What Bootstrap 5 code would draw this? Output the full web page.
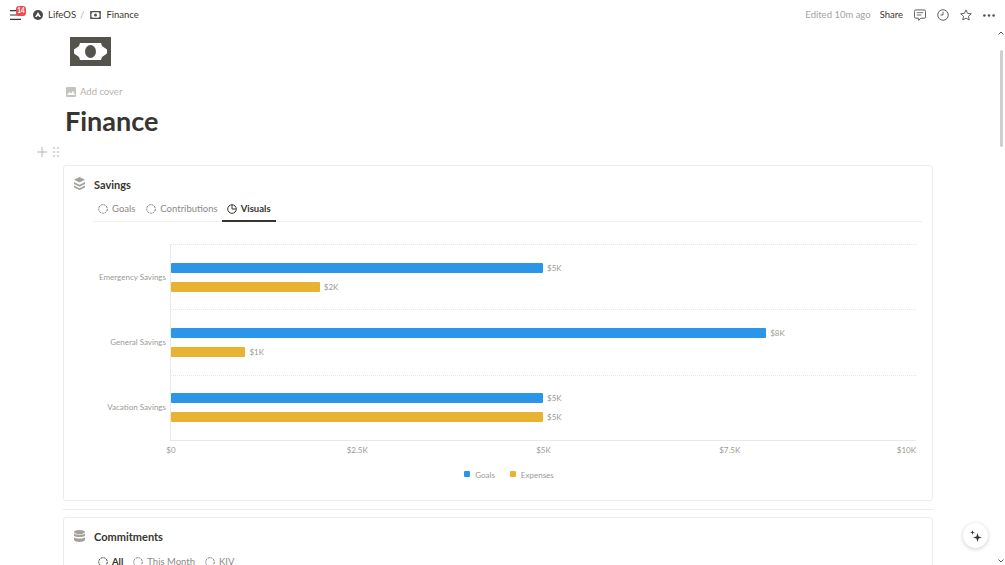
<!DOCTYPE html>
<html lang="en">
<head>
  <meta charset="UTF-8" />
  <title>Finance</title>
  <link href="https://cdn.jsdelivr.net/npm/bootstrap@5.3.0/dist/css/bootstrap.min.css" rel="stylesheet">
  <style>
    html, body { height: 100%; overflow: hidden; }
    body { font-family: Lato, "Noto Sans", sans-serif; color: #37352f; background: #fff; font-size: 14px; }
    .app-shell { height: 565px; position: relative; overflow: hidden; }
    .top-bar { height: 30px; padding: 0 10px; font-size: 9.5px; }
    .menu-wrap { position: relative; width: 12px; height: 10px; margin-right: 11px; }
    .menu-count { position: absolute; top: -4px; left: 6px; background: #eb4d4d; color: #fff; font-size: 6.5px; font-weight: 700; line-height: 10px; height: 10px; width: 10px; border-radius: 3px; text-align: center; }
    .crumb-logo { margin-right: 5px; }
    .crumb-note { margin: 0 5px 0 3px; }
    .crumb-sep { color: #b5b3ae; margin: 0 3px 0 4px; }
    .edited-at { color: #a5a39e; font-size: 9.5px; margin-right: -2px; }
    .bar-actions { gap: 11px; }
    .page-body { padding-left: 65px; width: 933px; }
    .page-icon { width: 41px; height: 29px; margin: 7px 0 0 5px; background: #55534e; }
    .add-cover { color: #b5b3ae; font-size: 9.5px; height: 20px; margin-top: 16px; margin-left: 1px; gap: 4px; }
    .page-title { font-size: 27px; font-weight: 700; line-height: 38px; margin: 0; height: 38px; }
    .drag-row { height: 22px; margin-left: -28px; gap: 6px; margin-top: 1px; }
    .panel-box { margin-left: -2px; border: 1px solid #ececea; border-radius: 3px; padding: 11px 10px 0 10px; margin-top: 2px; }
    .panel-head { padding-left: 20px; font-size: 11px; font-weight: 700; height: 16px; position: relative; }
    .panel-glyph { position: absolute; left: 0; top: 0; }
    .glyph-low { top: 1px; }
    .tab-row { margin: 7px 0 0 19px; height: 22px; border-bottom: 1px solid #efefed; font-size: 9.5px; color: #8c8a85; }
    .tab-item { display: flex; align-items: center; gap: 4px; padding: 0 6px 4px 5px; height: 22px; }
    .tab-item.is-on { color: #37352f; font-weight: 700; border-bottom: 2px solid #37352f; margin-left: -2px; padding: 0 5px 2px 5px; }
    .chart-wrap { margin-top: 22px; height: 256px; color: #9b9a96; font-size: 8px; position: relative; }
    .chart-labels { width: 75px; height: 196px; margin-left: 21px; }
    .chart-labels > div { height: 65.33px; padding-right: 4px; text-align: right; display: flex; align-items: center; justify-content: end; white-space: nowrap; }
    .plot-area { width: 746px; height: 197px; border-left: 1px solid #e9e9e7; border-bottom: 1px solid #e9e9e7; }
    .plot-group { height: 65.33px; border-top: 1px dotted #e6e6e4; display: flex; flex-direction: column; justify-content: center; gap: 9px; }
    .bar-line { display: flex; align-items: center; gap: 4px; height: 10px; }
    .bar-fill { height: 10px; border-radius: 1px; }
    .fill-goal { background: #2b96e8; }
    .fill-spend { background: #e8b232; }
    .axis-row { position: relative; height: 14px; margin: 3px 0 0 97px; width: 746px; }
    .axis-row span { position: absolute; transform: translateX(-50%); top: 0; }
    .axis-row span:last-child { transform: translateX(-100%); }
    .legend-row { margin-top: 11px; gap: 15px; margin-left: 22px; }
    .legend-dot { width: 6px; height: 6px; display: inline-block; border-radius: 1px; margin-right: 5px; position: relative; top: -1px; }
    .section-rule { border-top: 1px solid #ececea; margin: 8px 0 7px -2px; }
    .second-panel { height: 60px; }
    .filter-row { margin: 10px 0 0 24px; font-size: 9.5px; color: #8c8a85; gap: 10px; }
    .filter-row span { gap: 4px; }
    .filter-on { color: #37352f; font-weight: 700; }
    .scroll-rail { position: absolute; right: 0; top: 28px; bottom: 0; width: 11px; }
    .scroll-thumb { position: absolute; left: 6px; top: 22px; width: 3px; height: 97px; background: #cfcfcf; border-radius: 2px; }
    .scroll-up { position: absolute; left: 4px; top: 3px; }
    .scroll-down { position: absolute; left: 4px; bottom: 2px; }
    .assist-btn { position: absolute; right: 17px; bottom: 17px; width: 25px; height: 25px; border-radius: 50%; background: #fff; box-shadow: 0 1px 4px rgba(0,0,0,.2); }
  </style>
</head>
<body>
<div class="app-shell">
  <div class="top-bar d-flex align-items-center">
    <div class="menu-wrap">
      <svg width="12" height="10" viewBox="0 0 12 10" class="d-block"><path d="M0 .6h11M0 5h11M0 9.400h11" stroke="#37352f" stroke-width="1.200"/></svg>
      <span class="menu-count">14</span>
    </div>
    <svg width="10" height="10" viewBox="0 0 12 12" class="crumb-logo"><circle cx="6" cy="6" r="6" fill="#4a4945"/><path d="M6 2.500 9.500 8.500H7.500L6 6.700 4.500 8.500h-2z" fill="#fff"/></svg>
    <span class="text-nowrap">LifeOS</span>
    <span class="crumb-sep">/</span>
    <svg width="11" height="8" viewBox="0 0 12 9" class="crumb-note"><rect width="12" height="9" fill="#55534e"/><path d="M2.500 1.500h7l1 1.500v3l-1 1.500h-7L1.500 6V3z" fill="#fff"/><circle cx="6" cy="4.500" r="1.700" fill="#55534e"/></svg>
    <span>Finance</span>
    <div class="ms-auto d-flex align-items-center bar-actions">
      <span class="edited-at text-nowrap">Edited 10m ago</span>
      <span>Share</span>
      <svg width="12" height="12" viewBox="0 0 13 13"><path d="M2 1h9a1.500 1.500 0 0 1 1.500 1.500v6A1.500 1.500 0 0 1 11 10H7.500L5 12.300V10H2A1.500 1.500 0 0 1 .5 8.500v-6A1.500 1.500 0 0 1 2 1z" fill="none" stroke="#55534e"/><path d="M3 4h7M3 6.500h5" stroke="#55534e" stroke-width=".9"/></svg>
      <svg width="12" height="12" viewBox="0 0 13 13"><circle cx="6.500" cy="6.500" r="5.700" fill="none" stroke="#55534e"/><path d="M6.500 3v3.500H3.800" fill="none" stroke="#55534e"/></svg>
      <svg width="12" height="12" viewBox="0 0 13 13"><path d="M6.500 1 8.200 4.700l4 .5-3 2.700.8 4-3.500-2-3.500 2 .8-4-3-2.700 4-.5z" fill="none" stroke="#55534e"/></svg>
      <svg width="12" height="3" viewBox="0 0 13 3"><circle cx="1.500" cy="1.500" r="1.400" fill="#55534e"/><circle cx="6.500" cy="1.500" r="1.400" fill="#55534e"/><circle cx="11.500" cy="1.500" r="1.400" fill="#55534e"/></svg>
    </div>
  </div>

  <div class="page-body">
    <div class="page-icon d-flex align-items-center justify-content-center">
      <svg width="33" height="17" viewBox="0 0 33 17"><path d="M6 0h21l1 3 5 3.500v4L28 14l-1 3H6l-1-3-5-3.500v-4L5 3z" fill="#fff"/><ellipse cx="16.500" cy="8.500" rx="5.500" ry="6.500" fill="#55534e"/></svg>
    </div>
    <div class="add-cover d-flex align-items-center">
      <svg width="10" height="10" viewBox="0 0 10 10"><rect width="10" height="10" rx="1" fill="#c4c3bf"/><path d="M1 8 3.500 5 5 6.500 7 4l2 4z" fill="#fff"/></svg>
      <span>Add cover</span>
    </div>
    <h1 class="page-title">Finance</h1>
    <div class="drag-row d-flex align-items-center">
      <svg width="10" height="10" viewBox="0 0 10 10"><path d="M5 0v10M0 5h10" stroke="#b5b3ae" stroke-width="1"/></svg>
      <svg width="6" height="10" viewBox="0 0 6 10" fill="#c4c3bf"><circle cx="1" cy="1" r=".9"/><circle cx="5" cy="1" r=".9"/><circle cx="1" cy="5" r=".9"/><circle cx="5" cy="5" r=".9"/><circle cx="1" cy="9" r=".9"/><circle cx="5" cy="9" r=".9"/></svg>
    </div>

    <div class="panel-box">
      <div class="panel-head d-flex align-items-center">
        <svg class="panel-glyph" width="11" height="13" viewBox="0 0 11 13" fill="#a3a199"><path d="M5.500 0 11 2.700 5.500 5.400 0 2.700z"/><path d="M0 5l5.500 2.700L11 5v2L5.500 9.700 0 7z"/><path d="M0 8.500l5.500 2.700L11 8.500v2l-5.500 2.700L0 10.500z"/></svg>
        Savings
      </div>
      <div class="tab-row d-flex">
        <div class="tab-item"><svg width="10" height="10" viewBox="0 0 10 10"><circle cx="5" cy="5" r="4.300" fill="none" stroke="#777" stroke-dasharray="2 .9"/></svg>Goals</div>
        <div class="tab-item"><svg width="10" height="10" viewBox="0 0 10 10"><circle cx="5" cy="5" r="4.300" fill="none" stroke="#777" stroke-dasharray="2 .9"/></svg>Contributions</div>
        <div class="tab-item is-on"><svg width="10" height="10" viewBox="0 0 10 10"><circle cx="5" cy="5" r="4.300" fill="none" stroke="#37352f"/><path d="M5 1v4h4" fill="none" stroke="#37352f"/></svg>Visuals</div>
      </div>
      <div class="chart-wrap">
        <div class="d-flex">
          <div class="chart-labels">
            <div>Emergency Savings</div>
            <div>General Savings</div>
            <div>Vacation Savings</div>
          </div>
          <div class="plot-area" id="plot"></div>
        </div>
        <div class="axis-row" id="axis"></div>
        <div class="legend-row d-flex justify-content-center">
          <span><i class="legend-dot fill-goal"></i>Goals</span>
          <span><i class="legend-dot fill-spend"></i>Expenses</span>
        </div>
      </div>
    </div>

    <div class="section-rule"></div>

    <div class="panel-box second-panel">
      <div class="panel-head d-flex align-items-center">
        <svg class="panel-glyph glyph-low" width="11" height="12" viewBox="0 0 11 12" fill="#a3a199"><ellipse cx="5.500" cy="2" rx="5.500" ry="2"/><path d="M0 3.500c1 1.600 10 1.600 11 0v2.200c-1 1.800-10 1.800-11 0z"/><path d="M0 7.300c1 1.600 10 1.600 11 0v2.700c-1 2.600-10 2.600-11 0z"/></svg>
        Commitments
      </div>
      <div class="filter-row d-flex">
        <span class="d-flex align-items-center filter-on"><svg width="10" height="10" viewBox="0 0 10 10"><circle cx="5" cy="5" r="4.300" fill="none" stroke="#37352f" stroke-dasharray="2 .9"/></svg>All</span>
        <span class="d-flex align-items-center"><svg width="10" height="10" viewBox="0 0 10 10"><circle cx="5" cy="5" r="4.300" fill="none" stroke="#777" stroke-dasharray="2 .9"/></svg>This Month</span>
        <span class="d-flex align-items-center"><svg width="10" height="10" viewBox="0 0 10 10"><circle cx="5" cy="5" r="4.300" fill="none" stroke="#777" stroke-dasharray="2 .9"/></svg>KIV</span>
      </div>
    </div>
  </div>

  <div class="scroll-rail">
    <svg class="scroll-up" width="6" height="4" viewBox="0 0 6 4"><path d="M.5 3.500 3 1l2.500 2.500" fill="none" stroke="#555"/></svg>
    <div class="scroll-thumb"></div>
    <svg class="scroll-down" width="6" height="4" viewBox="0 0 6 4"><path d="M.5.500 3 3 5.500.5" fill="none" stroke="#555"/></svg>
  </div>
  <div class="assist-btn d-flex align-items-center justify-content-center">
    <svg width="12" height="12" viewBox="0 0 12 12" fill="#37352f"><path d="M7.500 3 8.600 6.400 12 7.500 8.600 8.600 7.500 12 6.400 8.600 3 7.500 6.400 6.400z"/><path d="M2.500 0 3.100 1.900 5 2.500 3.100 3.100 2.500 5 1.900 3.100 0 2.500 1.900 1.900z"/></svg>
  </div>
</div>

<script src="https://cdn.jsdelivr.net/npm/bootstrap@5.3.0/dist/js/bootstrap.bundle.min.js"></script>
<script>
  const rows = [
    { goal: 5, spend: 2 },
    { goal: 8, spend: 1 },
    { goal: 5, spend: 5 }
  ];
  const fmt = v => "$" + v + "K";
  const plot = document.getElementById("plot");
  rows.forEach(r => {
    const g = document.createElement("div");
    g.className = "plot-group";
    g.innerHTML = `
      <div class="bar-line"><div class="bar-fill fill-goal" style="width:${r.goal * 74.4}px"></div>${fmt(r.goal)}</div>
      <div class="bar-line"><div class="bar-fill fill-spend" style="width:${r.spend * 74.4}px"></div>${fmt(r.spend)}</div>`;
    plot.appendChild(g);
  });
  const axis = document.getElementById("axis");
  ["$0", "$2.5K", "$5K", "$7.5K", "$10K"].forEach((t, i) => {
    const s = document.createElement("span");
    s.textContent = t;
    s.style.left = (i * 186.25) + "px";
    axis.appendChild(s);
  });
</script>
</body>
</html>
